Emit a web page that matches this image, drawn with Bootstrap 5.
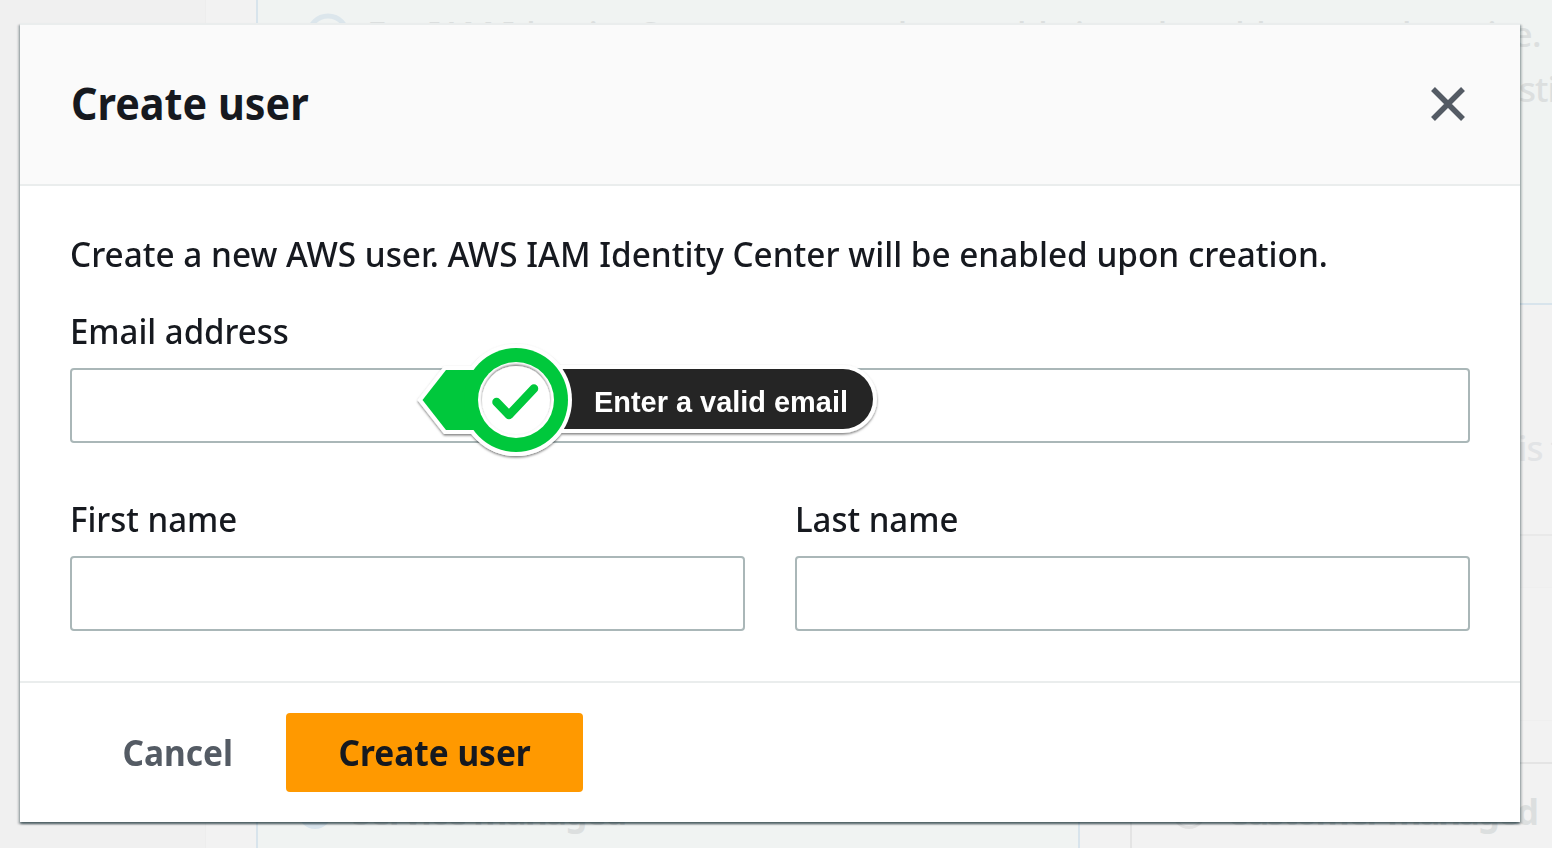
<!DOCTYPE html>
<html lang="en">
<head>
<meta charset="utf-8">
<meta name="viewport" content="width=device-width, initial-scale=1">
<title>Create user</title>
<link href="https://cdn.jsdelivr.net/npm/bootstrap@5.3.0/dist/css/bootstrap.min.css" rel="stylesheet">
<style>
  body { font-family: "Noto Sans", "Open Sans", sans-serif; color: #16191f; background: #f2f2f2; height: 848px; overflow: hidden; }
  /* dimmed console page behind the dialog */
  .console { height: 848px; font-size: 35px; line-height: 54px; color: #dcdfdf; overflow: hidden; font-weight: 500; }
  .side-nav { width: 206px; background: #f0f0f0; border-right: 1px solid #ededed; }
  .notice { margin-left: 50px; height: 305px; background: #f0f3f2; border-left: 2px solid #d8e4ec; border-bottom: 2px solid #d8e4ec; padding: 7px 0 0 49px; gap: 16px; white-space: nowrap; }
  .notice-icon { margin-top: 6px; }
  .notice-first { letter-spacing: -.64px; }
  .notice-more { padding-left: 1152px; line-height: 56px; letter-spacing: -1px; }
  .summary { height: 231px; padding: 116px 0 0 1312px; border-bottom: 2px solid #e9e9e9; white-space: nowrap; color: #e2e4e6; letter-spacing: -1px; }
  .strip { height: 52px; border-bottom: 1px solid #efefef; background: #f1f1f1; }
  .panel-head { height: 133px; border-bottom: 1px solid #efefef; }
  .choices { margin: 41px 0 0 50px; gap: 50px; white-space: nowrap; }
  .choice { width: 824px; height: 200px; flex: none; border: 2px solid #e4e4e4; padding: 21px 0 0 40px; font-weight: 700; letter-spacing: -2.05px; }
  .choice.selected { border-color: #d8e4ec; background: #f0f3f2; letter-spacing: -1.65px; }
  .choice p { font-weight: 500; padding-left: 52px; line-height: 48px; }
  .choice-label { gap: 20px; }

  /* dialog */
  .modal-dialog { max-width: none; width: 1500px; margin: 23px 0 0 20px; }
  .modal-content { height: 799px; border: 0; border-top: 2px solid #eaeded; border-radius: 0; background: #fff; color: #16191f;
    box-shadow: 0 2px 2px rgba(0,28,36,.5), 2px 2px 2px rgba(0,28,36,.2), -2px 2px 2px rgba(0,28,36,.2); }
  .modal-header { height: 161px; flex: none; padding: 0 54px 1px 51px; border-bottom: 2px solid #eaeded; border-radius: 0; background: #fafafa; }
  .modal-title { font-size: 45px; line-height: 56px; font-weight: 700; margin-top: -3px; transform: scaleX(.918); transform-origin: left; }
  .close-btn { line-height: 0; color: #545b64; }
  .modal-body { padding: 40px 50px 0; font-size: 35px; line-height: 56px; font-weight: 500; }
  .intro { margin-bottom: 21px; white-space: nowrap; transform: scaleX(.952); transform-origin: left; }
  .form-label { display: block; line-height: 56px; margin-bottom: 9px; transform: scaleX(.942); transform-origin: left; }
  .form-control { height: 75px; border: 2px solid #aab7b8; border-radius: 4px; background: #fff; }
  .names { --bs-gutter-x: 50px; margin-top: 48px; }
  .modal-footer { height: 141px; flex: none; padding: 0 0 0 50px; border-top: 2px solid #eaeded; border-radius: 0; }
  .modal-footer .btn { height: 79px; border-radius: 4px; border: 0; font-size: 35px; font-weight: 700; padding: 0; margin: 0; line-height: 79px; white-space: nowrap; }
  .btn span { display: inline-block; transform: scaleX(.955); }
  .btn-cancel { width: 216px; color: #545b64; }
  .btn-create, .btn-create:hover { width: 297px; background: #ff9900; color: #16191f; }
  .hint { position: absolute; left: 330px; top: -38px; width: 500px; height: 140px; z-index: 5; pointer-events: none; }
</style>
</head>
<body>
<div class="console d-flex" aria-hidden="true">
  <nav class="side-nav flex-shrink-0"></nav>
  <main class="flex-grow-1 overflow-hidden">
    <section class="notice d-flex">
      <svg class="notice-icon flex-shrink-0" width="44" height="44" viewBox="0 0 44 44"><circle cx="21" cy="22" r="19" fill="none" stroke="#dce6ec" stroke-width="5"/></svg>
      <div>
        <div class="notice-first">For IAM Identity Center, you need to enable it and enable trusted service.</div>
        <div class="notice-more">sti</div>
      </div>
    </section>
    <section class="summary">is t</section>
    <div class="strip"></div>
    <div class="panel-head"></div>
    <section class="choices d-flex">
      <div class="choice selected">
        <div class="choice-label d-flex align-items-center"><svg width="34" height="34" viewBox="0 0 34 34"><circle cx="17" cy="17" r="17" fill="#d8e4ec"/></svg>Service managed</div>
        <p>Directly allow users and groups to sign in</p>
      </div>
      <div class="choice">
        <div class="choice-label d-flex align-items-center"><svg width="34" height="34" viewBox="0 0 34 34"><circle cx="17" cy="17" r="15.5" fill="none" stroke="#e2e2e2" stroke-width="3"/></svg>Customer managed</div>
        <p>Manually add users</p>
      </div>
    </section>
  </main>
</div>

<div class="modal d-block overflow-hidden" role="dialog" aria-labelledby="dialog-title">
  <div class="modal-dialog">
    <form class="modal-content">
      <div class="modal-header d-flex align-items-center justify-content-between">
        <h1 class="modal-title" id="dialog-title">Create user</h1>
        <button type="button" class="close-btn btn p-0 border-0" aria-label="Close">
          <svg width="36" height="36" viewBox="0 0 36 36" fill="none" stroke="currentColor" stroke-width="5.500"><path d="M3 3 33 33M33 3 3 33"/></svg>
        </button>
      </div>
      <div class="modal-body">
        <p class="intro">Create a new AWS user. AWS IAM Identity Center will be enabled upon creation.</p>
        <label class="form-label" for="email">Email address</label>
        <div class="position-relative">
          <input class="form-control" id="email" type="text">
          <svg class="hint" viewBox="0 0 500 140">
            <defs>
              <filter id="drop" x="-5%" y="-10%" width="110%" height="125%"><feDropShadow dx="0" dy="1.5" stdDeviation="1.2" flood-color="#000" flood-opacity=".5"/></filter>
            </defs>
            <g filter="url(#drop)" fill="#fff" stroke="#fff" stroke-width="8">
              <path d="M116 39H443a30 30 0 0 1 0 60H116z"/>
              <path d="M22.500 70 46 40H90V100H46z"/>
              <circle cx="116" cy="70" r="52"/>
            </g>
            <path d="M116 39H443a30 30 0 0 1 0 60H116z" fill="#252525"/>
            <circle cx="116" cy="70" r="56" fill="#fff"/>
            <path d="M22.500 70 46 40H90V100H46z" fill="#00c83c"/>
            <circle cx="116" cy="70" r="52" fill="#00c83c"/>
            <circle cx="116" cy="70" r="38" fill="#fff"/>
            <circle cx="116" cy="70" r="34" fill="#fff" filter="url(#drop)" transform="rotate(180 116 70)"/>
            <path d="M96.500 72 109 85 134 58.500" fill="none" stroke="#00c83c" stroke-width="8.500" stroke-linecap="round" stroke-linejoin="round"/>
            <text x="194" y="82" textLength="254" lengthAdjust="spacingAndGlyphs" fill="#fff" font-family="Liberation Sans, sans-serif" font-weight="700" font-size="30">Enter a valid email</text>
          </svg>
        </div>
        <div class="row names">
          <div class="col-6">
            <label class="form-label" for="first-name">First name</label>
            <input class="form-control" id="first-name" type="text">
          </div>
          <div class="col-6">
            <label class="form-label" for="last-name">Last name</label>
            <input class="form-control" id="last-name" type="text">
          </div>
        </div>
      </div>
      <div class="modal-footer d-flex justify-content-start align-items-center">
        <button type="button" class="btn btn-cancel"><span>Cancel</span></button>
        <button type="button" class="btn btn-create"><span>Create user</span></button>
      </div>
    </form>
  </div>
</div>
<script src="https://cdn.jsdelivr.net/npm/bootstrap@5.3.0/dist/js/bootstrap.bundle.min.js"></script>
</body>
</html>
